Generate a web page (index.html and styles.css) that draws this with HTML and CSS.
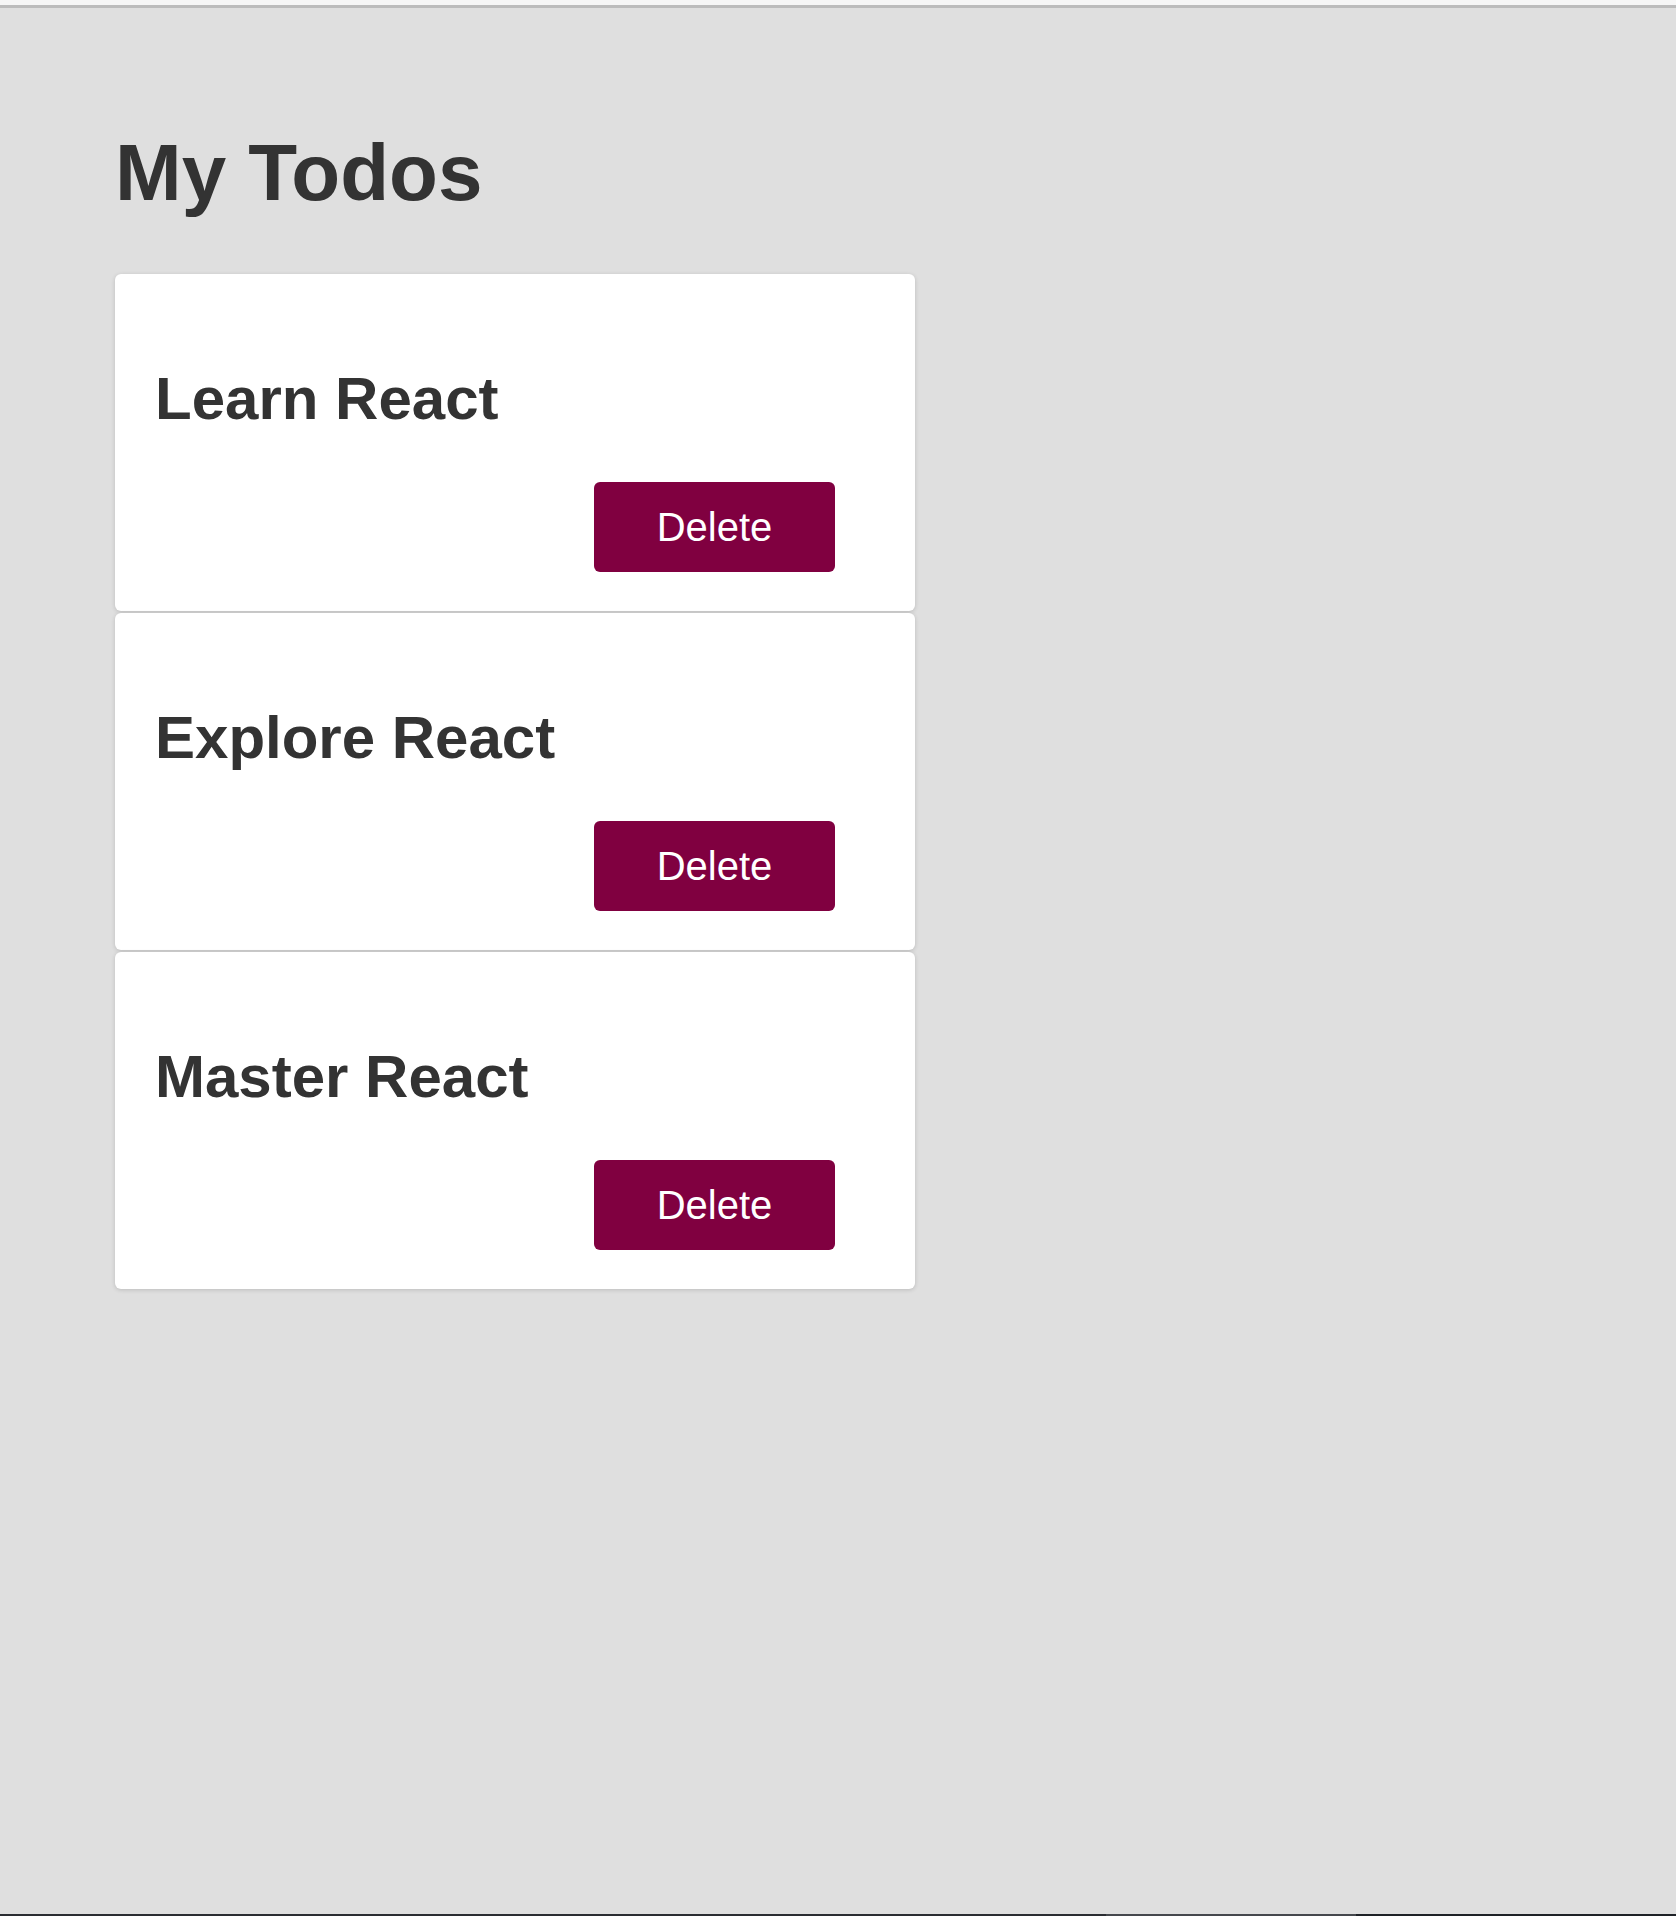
FILE: index.html
```html
<!DOCTYPE html>
<html lang="en">
<head>
<meta charset="utf-8">
<title>My Todos</title>
<link rel="stylesheet" href="styles.css">
</head>
<body>
<div class="topbar"></div>
<main class="page">
  <h1 class="page-title">My Todos</h1>
  <div class="todo-list">
    <div class="card">
      <h2 class="card-title">Learn React</h2>
      <div class="actions"><button class="btn">Delete</button></div>
    </div>
    <div class="card">
      <h2 class="card-title">Explore React</h2>
      <div class="actions"><button class="btn">Delete</button></div>
    </div>
    <div class="card">
      <h2 class="card-title">Master React</h2>
      <div class="actions"><button class="btn">Delete</button></div>
    </div>
  </div>
</main>
<div class="bottombar"><span class="seg-a"></span><span class="seg-b"></span><span class="seg-c"></span></div>
</body>
</html>
```
FILE: styles.css
```css
html, body {
  margin: 0;
  padding: 0;
}
body {
  background: #dfdfdf;
  font-family: "Liberation Sans", Arial, sans-serif;
  color: #333333;
  min-height: 100vh;
  display: flex;
  flex-direction: column;
}
.topbar {
  height: 5px;
  background: #f6f6f6;
  border-bottom: 3px solid #bcbcbc;
  flex: none;
}
.page {
  flex: 1;
  padding: 0 0 0 115px;
}
.page-title {
  margin: 120px 0 0 0;
  font-size: 80px;
  line-height: 90px;
  font-weight: bold;
  color: #333333;
}
.todo-list {
  margin-top: 56px;
  width: 800px;
  display: flex;
  flex-direction: column;
  gap: 2px;
}
.card {
  background: #ffffff;
  border-radius: 6px;
  box-shadow: 0 1px 4px rgba(0, 0, 0, 0.16);
  padding: 90px 80px 39px 40px;
  display: flex;
  flex-direction: column;
  height: 337px;
  box-sizing: border-box;
}
.card-title {
  margin: 0;
  font-size: 60px;
  line-height: 69px;
  font-weight: bold;
  color: #333333;
}
.actions {
  margin-top: 49px;
  display: flex;
  justify-content: flex-end;
}
.btn {
  width: 241px;
  height: 90px;
  background: #800040;
  color: #ffffff;
  border: none;
  border-radius: 6px;
  font-family: "Liberation Sans", Arial, sans-serif;
  font-size: 40px;
  padding: 0;
  cursor: pointer;
}
.bottombar {
  flex: none;
  height: 2px;
  display: flex;
}
.seg-a {
  width: 1106px;
  background: #2a2d32;
}
.seg-b {
  width: 250px;
  background: #45484d;
}
.seg-c {
  flex: 1;
  background: #1e2227;
}
```
